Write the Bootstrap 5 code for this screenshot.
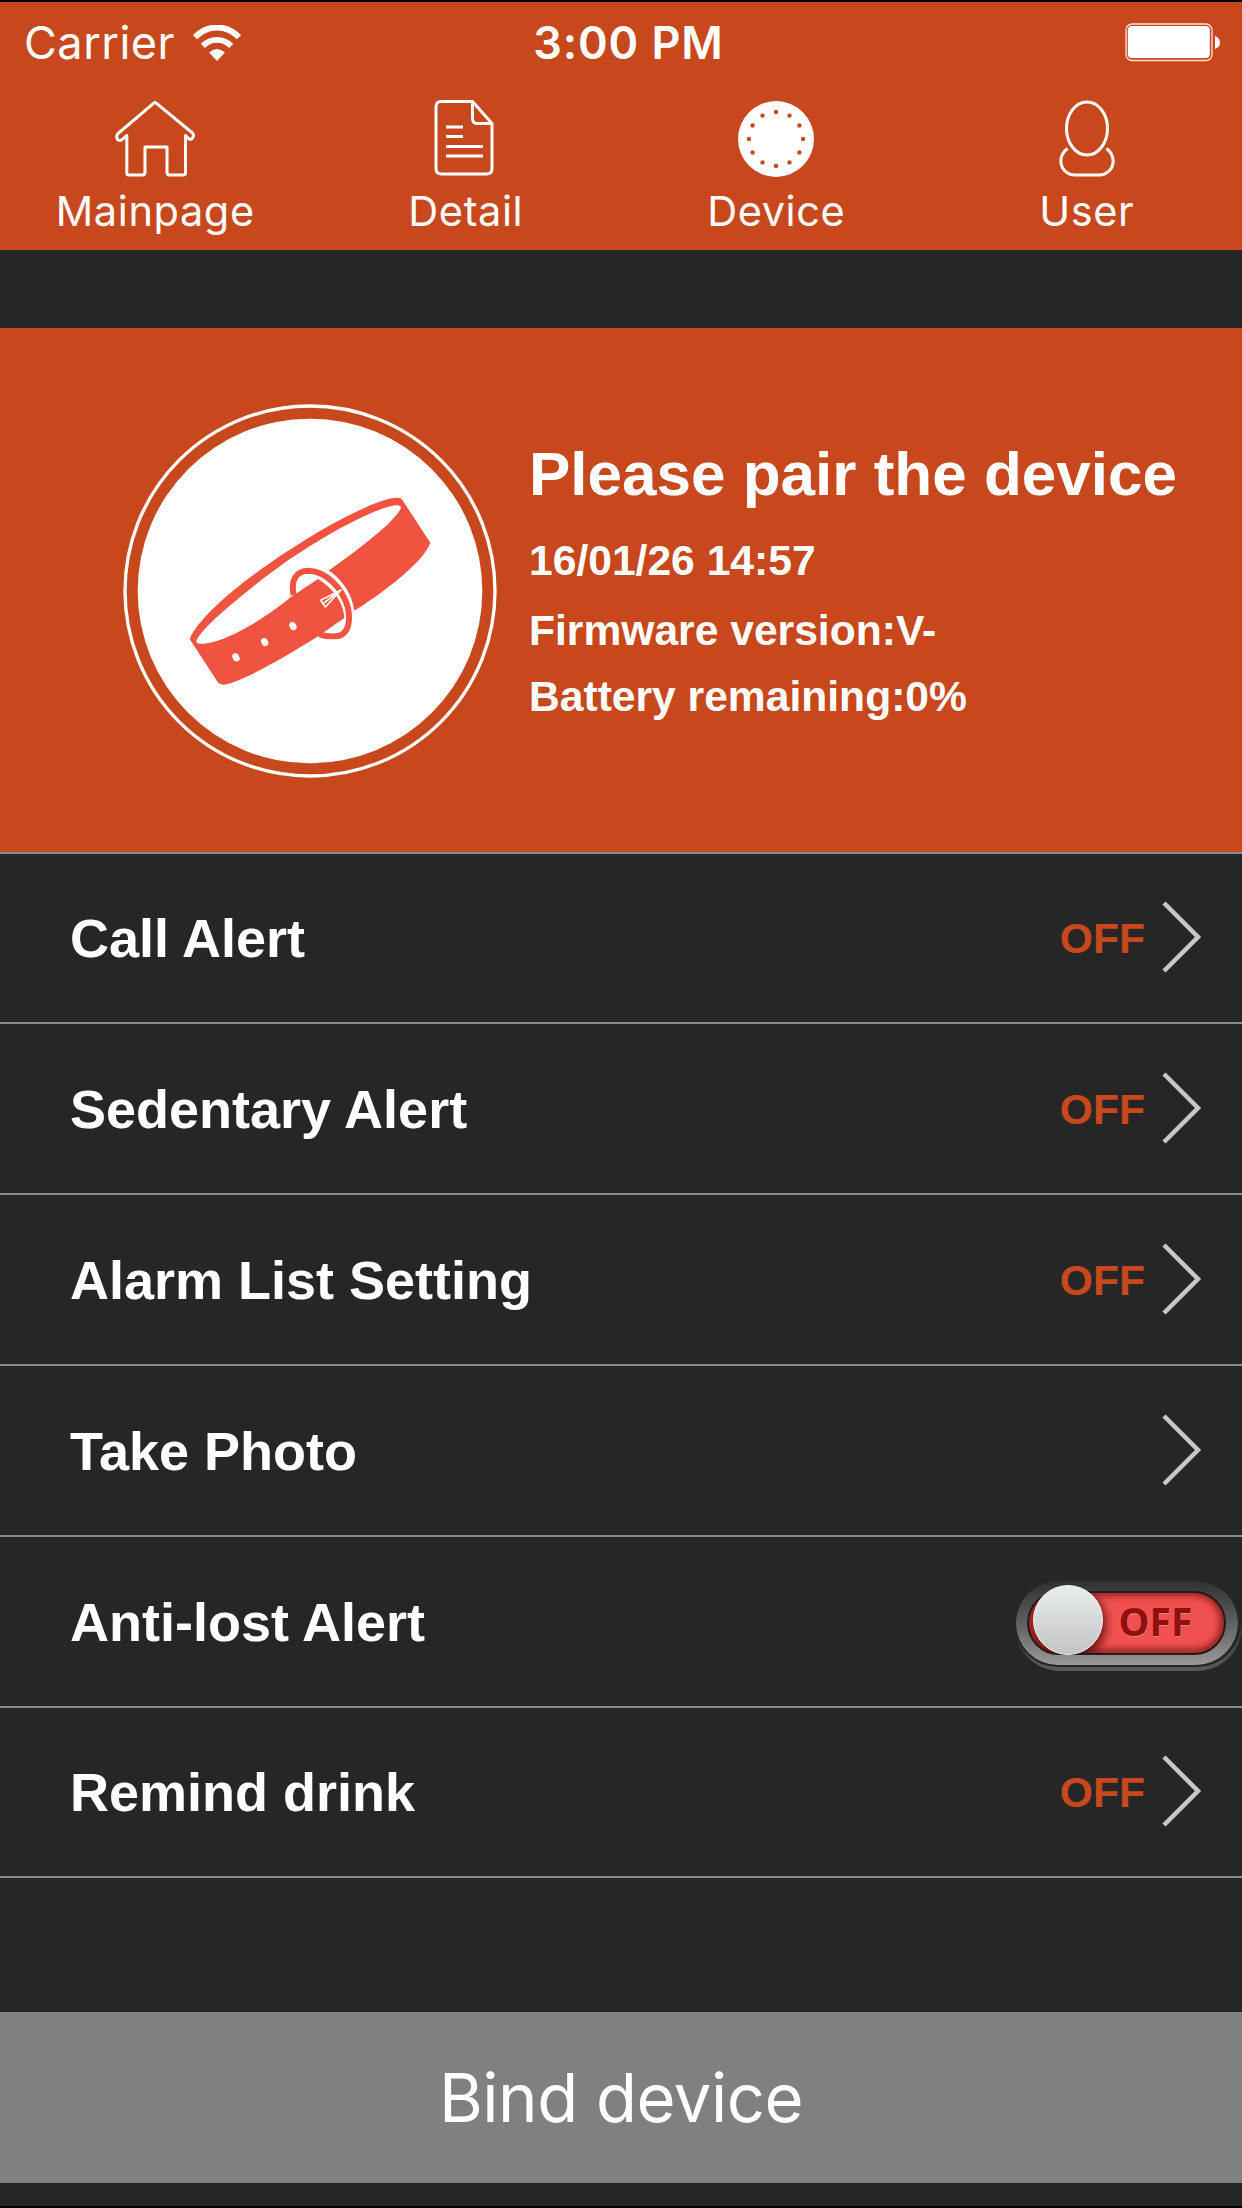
<!DOCTYPE html>
<html lang="en">
<head>
<meta charset="utf-8">
<meta name="viewport" content="width=device-width, initial-scale=1">
<title>Device</title>
<link href="https://cdn.jsdelivr.net/npm/bootstrap@5.3.0/dist/css/bootstrap.min.css" rel="stylesheet">
<style>
  body { background: #262626; color: #fff; font-family: "Liberation Sans", Arial, sans-serif; }
  svg { display: block; flex: none; }
  .screen { height: 2208px; border-top: 2px solid #000; border-bottom: 2px solid #000; overflow: hidden; }
  .sf { font-family: Inter, "Liberation Sans", sans-serif; }
  .brand-bg { background: #c8481e; }
  .top-area { height: 248px; }
  .status { height: 82px; font-size: 45px; line-height: 54px; }
  .status > div { flex: 1 1 0; }
  .carrier { padding-left: 24px; gap: 18px; letter-spacing: .5px; }
  .clock { font-weight: 600; letter-spacing: .9px; padding-left: 13px; }
  .power { padding-right: 22px; }
  .tabs { padding-top: 15px; }
  .tabs .nav-link { padding: 0; color: #fff; font-size: 41.5px; line-height: 50px; letter-spacing: .6px; gap: 9px; }
  .hero { height: 524px; margin-top: 78px; padding-left: 123px; gap: 30px; }
  .hero > svg { margin-top: 2px; }
  .hero-info { padding-top: 109px; font-weight: 700; }
  .hero-title { font-size: 62px; line-height: 74px; font-weight: 700; margin: 0 0 24px; }
  .hero-line { font-size: 42.6px; line-height: 50px; white-space: nowrap; }
  .options { --bs-list-group-bg: transparent; --bs-list-group-color: #fff; }
  .options .list-group-item { height: 171px; border: 0; border-top: 2px solid #888c90; padding: 0 40px 0 70px; color: #fff; }
  .options .list-group-item:first-child { height: 170px; }
  .options .list-group-item:last-child { height: 172px; border-bottom: 2px solid #888c90; }
  .options .has-switch { padding-right: 0; }
  .has-switch svg { margin-top: 9px; }
  .opt-name { font-size: 54px; font-weight: 700; line-height: 64px; }
  .opt-state { font-size: 42.6px; font-weight: 700; line-height: 50px; color: #c8481e; margin-right: 17px; }
  .bind { margin-top: 134px; height: 171px; border: 0; border-radius: 0; background: #808080; color: #fff; font-size: 67px; line-height: 80px; letter-spacing: -.5px; padding: 0; }
</style>
</head>
<body>
<main class="screen d-flex flex-column">
  <header class="top-area brand-bg sf">
    <div class="status d-flex align-items-center">
      <div class="carrier d-flex align-items-center"><span>Carrier</span>
        <svg width="48" height="36" viewBox="0 0 48 36" fill="none" stroke="#fff">
          <path d="M2 12.200C14.500-.7 33.500-.7 46 12.200" stroke-width="6"/>
          <path d="M9.800 20.800C18 12.800 30 12.800 38.200 20.800" stroke-width="5.800"/>
          <path d="M16 27.500Q24 20.500 32 27.500L24 36Z" fill="#fff" stroke="none"/>
        </svg>
      </div>
      <div class="clock text-center">3:00 PM</div>
      <div class="power d-flex justify-content-end">
        <svg width="95" height="40" viewBox="0 0 95 40">
          <rect x="1" y="1" width="86" height="36.500" rx="6" fill="none" stroke="#fff" stroke-opacity=".85" stroke-width="1.300"/>
          <rect x="2.800" y="3" width="82" height="32" rx="4" fill="#fff"/>
          <path d="M90 13Q95 15 95 19.500Q95 24 90 26Z" fill="#fff"/>
        </svg>
      </div>
    </div>
    <nav class="tabs nav nav-justified">
      <a class="nav-link d-flex flex-column align-items-center" href="#">
        <svg width="80" height="78" viewBox="0 0 80 78" fill="none" stroke="#fff" stroke-width="3" stroke-linejoin="round" stroke-linecap="round">
          <path d="M11.800 36.500V74Q11.800 76 14 76H27Q30 76 30 73V48H52V73Q52 76 54.500 76H68Q70.500 76 70.500 73.500V36.500L74 40Q77 41 78 38Q79 35.500 77.500 34L40 3.200L2.500 35Q.8 38 3 41Q5.500 42.500 8 39.800Z"/>
        </svg>
        <span>Mainpage</span>
      </a>
      <a class="nav-link d-flex flex-column align-items-center" href="#">
        <svg width="64" height="78" viewBox="0 0 64 78" fill="none" stroke="#fff" stroke-width="3" stroke-linejoin="round">
          <path d="M7 2.500H38.500L58 24.500V69.500Q58 75 52.500 75H7.500Q2 75 2 69.500V8Q2 2.500 7 2.500Z"/>
          <path d="M38.500 2.500V19Q38.500 24.500 43 24.500H58"/>
          <path d="M12 28H29M12 37.500H29M12 47.500H49M12 57H49"/>
        </svg>
        <span>Detail</span>
      </a>
      <a class="nav-link active d-flex flex-column align-items-center" href="#">
        <svg width="78" height="78" viewBox="0 0 78 78">
          <circle cx="39" cy="40" r="38" fill="#fff"/>
          <g fill="#c8481e">
            <circle cx="39" cy="13" r="2.200"/><circle cx="52.500" cy="16.600" r="2.200"/><circle cx="62.400" cy="26.500" r="2.200"/>
            <circle cx="66" cy="40" r="2.200"/><circle cx="62.400" cy="53.500" r="2.200"/><circle cx="52.500" cy="63.400" r="2.200"/>
            <circle cx="39" cy="67" r="2.200"/><circle cx="25.500" cy="63.400" r="2.200"/><circle cx="15.600" cy="53.500" r="2.200"/>
            <circle cx="12" cy="40" r="2.200"/><circle cx="15.600" cy="26.500" r="2.200"/><circle cx="25.500" cy="16.600" r="2.200"/>
          </g>
        </svg>
        <span>Device</span>
      </a>
      <a class="nav-link d-flex flex-column align-items-center" href="#">
        <svg width="56" height="78" viewBox="0 0 56 78" fill="none" stroke="#fff" stroke-width="3">
          <ellipse cx="28" cy="29.500" rx="20.500" ry="26.500"/>
          <path d="M8.500 49.500C2 54.500 1.500 60 2 64C3 71.500 9.500 76 16 76H40C46.500 76 53 71.500 54 64C54.500 60 54 54.500 47.500 49.500"/>
        </svg>
        <span>User</span>
      </a>
    </nav>
  </header>

  <section class="hero brand-bg d-flex flex-shrink-0">
    <svg class="align-self-center" width="376" height="374" viewBox="41 43 1128 1122">
      <circle cx="602" cy="604" r="555" fill="none" stroke="#fff" stroke-width="10"/>
      <circle cx="602" cy="604" r="517" fill="#fff"/>
      <g fill="#f0533f">
        <path fill-rule="evenodd" d="M241 748C260 700 340 622 440 550C570 455 720 368 815 335C850 323 868 322 877 328L963 459C945 510 850 590 735 663C727 610 703 575 658 543C760 470 850 400 872 361C884 339 850 344 800 364C690 410 560 490 455 572C350 655 280 715 262 752C256 765 280 765 312 757C380 738 460 690 545 622L626 568C665 592 700 630 706 684L626 740C500 820 395 875 345 885Q332 886 325 877Z"/>
      </g>
      <path d="M660 548C695 573 720 615 728 660" fill="none" stroke="#fff" stroke-width="8"/>
      <path d="M640 563C675 583 705 630 709 684" fill="none" stroke="#fff" stroke-width="7"/>
      <path d="M553 616C543 570 562 543 598 543C650 545 700 595 716 655C727 710 708 740 677 740Q650 741 630 734" fill="none" stroke="#f0533f" stroke-width="18"/>
      <path d="M695 601L634 632L648 652ZM695 601L641 642" fill="#f0533f" stroke="#fff" stroke-width="5" stroke-linejoin="round"/>
      <g fill="#fff">
        <ellipse cx="551" cy="709" rx="10" ry="13" transform="rotate(-30 551 709)"/>
        <ellipse cx="466" cy="757" rx="10" ry="13" transform="rotate(-30 466 757)"/>
        <ellipse cx="380" cy="803" rx="10" ry="13" transform="rotate(-30 380 803)"/>
      </g>
    </svg>
    <div class="hero-info">
      <h1 class="hero-title text-nowrap">Please pair the device</h1>
      <div class="hero-line mb-3 pb-1">16/01/26 14:57</div>
      <div class="hero-line mb-3">Firmware version:V-</div>
      <div class="hero-line">Battery remaining:0%</div>
    </div>
  </section>

  <div class="options list-group list-group-flush flex-shrink-0">
    <div class="list-group-item d-flex align-items-center">
      <span class="opt-name me-auto">Call Alert</span><span class="opt-state">OFF</span>
      <svg width="40" height="76" viewBox="0 0 40 76" fill="none" stroke="#c8c8c8" stroke-width="4.500"><path d="M2 3L36 37L2 71"/></svg>
    </div>
    <div class="list-group-item d-flex align-items-center">
      <span class="opt-name me-auto">Sedentary Alert</span><span class="opt-state">OFF</span>
      <svg width="40" height="76" viewBox="0 0 40 76" fill="none" stroke="#c8c8c8" stroke-width="4.500"><path d="M2 3L36 37L2 71"/></svg>
    </div>
    <div class="list-group-item d-flex align-items-center">
      <span class="opt-name me-auto">Alarm List Setting</span><span class="opt-state">OFF</span>
      <svg width="40" height="76" viewBox="0 0 40 76" fill="none" stroke="#c8c8c8" stroke-width="4.500"><path d="M2 3L36 37L2 71"/></svg>
    </div>
    <div class="list-group-item d-flex align-items-center">
      <span class="opt-name me-auto">Take Photo</span>
      <svg width="40" height="76" viewBox="0 0 40 76" fill="none" stroke="#c8c8c8" stroke-width="4.500"><path d="M2 3L36 37L2 71"/></svg>
    </div>
    <div class="list-group-item has-switch d-flex align-items-center">
      <span class="opt-name me-auto">Anti-lost Alert</span>
      <svg width="228" height="96" viewBox="0 0 228 96">
        <defs>
          <linearGradient id="rim" x1="0" y1="0" x2="0" y2="1"><stop offset="0" stop-color="#303030"/><stop offset=".5" stop-color="#606060"/><stop offset="1" stop-color="#999"/></linearGradient>
          <linearGradient id="knob" x1="0" y1="0" x2="0" y2="1"><stop offset="0" stop-color="#e8eeef"/><stop offset="1" stop-color="#c3c3c3"/></linearGradient>
          <linearGradient id="lip" x1="0" y1="0" x2="0" y2="1"><stop offset=".3" stop-color="#262626"/><stop offset="1" stop-color="#5a5a5a"/></linearGradient>
          <filter id="soft" x="-20%" y="-20%" width="140%" height="140%"><feGaussianBlur stdDeviation="5"/></filter>
          <clipPath id="well"><rect x="14" y="14" width="197" height="62" rx="31"/></clipPath>
        </defs>
        <rect x="1" y="3" width="227" height="90" rx="45" fill="url(#lip)"/>
        <rect x="0" y="0" width="227" height="89" rx="44" fill="#262626"/>
        <rect x="2" y="3" width="222" height="84" rx="42" fill="url(#rim)"/>
        <g clip-path="url(#well)">
          <rect x="14" y="14" width="197" height="62" fill="#f05050"/>
          <rect x="12" y="11" width="201" height="67" rx="33" fill="none" stroke="#5a1010" stroke-width="9" filter="url(#soft)"/>
          <circle cx="56" cy="46" r="36" fill="#400" opacity=".75" filter="url(#soft)"/>
        </g>
        <rect x="14" y="14" width="197" height="62" rx="31" fill="none" stroke="#2b1717" stroke-width="2"/>
        <text x="105" y="59" font-family="Open Sans" font-weight="700" font-size="39" fill="#f77">OFF</text>
        <text x="104.500" y="57.500" font-family="Open Sans" font-weight="700" font-size="39" fill="#8f1010">OFF</text>
        <circle cx="54" cy="42" r="34.500" fill="url(#knob)" stroke="#f4f6f6" stroke-width="1"/>
      </svg>
    </div>
    <div class="list-group-item d-flex align-items-center">
      <span class="opt-name me-auto">Remind drink</span><span class="opt-state">OFF</span>
      <svg width="40" height="76" viewBox="0 0 40 76" fill="none" stroke="#c8c8c8" stroke-width="4.500"><path d="M2 3L36 37L2 71"/></svg>
    </div>
  </div>

  <button type="button" class="bind btn sf w-100 flex-shrink-0">Bind device</button>
</main>
<script src="https://cdn.jsdelivr.net/npm/bootstrap@5.3.0/dist/js/bootstrap.bundle.min.js"></script>
</body>
</html>
